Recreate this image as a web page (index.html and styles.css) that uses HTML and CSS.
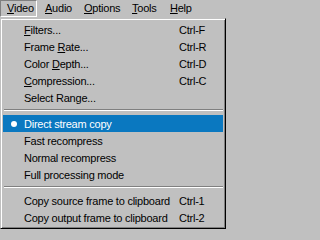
FILE: index.html
```html
<!DOCTYPE html>
<html>
<head>
<meta charset="utf-8">
<link rel="stylesheet" href="styles.css">
</head>
<body>
<div class="menubar">
  <div class="mitem active"><u>V</u>ideo</div>
  <div class="mitem"><u>A</u>udio</div>
  <div class="mitem"><u>O</u>ptions</div>
  <div class="mitem"><u>T</u>ools</div>
  <div class="mitem"><u>H</u>elp</div>
</div>
<div class="popup">
  <div class="row"><span class="check"></span><span class="label"><u>F</u>ilters...</span><span class="key">Ctrl-F</span></div>
  <div class="row"><span class="check"></span><span class="label">Frame <u>R</u>ate...</span><span class="key">Ctrl-R</span></div>
  <div class="row"><span class="check"></span><span class="label">Color <u>D</u>epth...</span><span class="key">Ctrl-D</span></div>
  <div class="row"><span class="check"></span><span class="label"><u>C</u>ompression...</span><span class="key">Ctrl-C</span></div>
  <div class="row"><span class="check"></span><span class="label">Select Range...</span><span class="key"></span></div>
  <div class="sep"></div>
  <div class="row selected"><span class="check"><span class="dot"></span></span><span class="label">Direct stream copy</span><span class="key"></span></div>
  <div class="row"><span class="check"></span><span class="label">Fast recompress</span><span class="key"></span></div>
  <div class="row"><span class="check"></span><span class="label">Normal recompress</span><span class="key"></span></div>
  <div class="row"><span class="check"></span><span class="label">Full processing mode</span><span class="key"></span></div>
  <div class="sep"></div>
  <div class="row"><span class="check"></span><span class="label">Copy source frame to clipboard</span><span class="key">Ctrl-1</span></div>
  <div class="row"><span class="check"></span><span class="label">Copy output frame to clipboard</span><span class="key">Ctrl-2</span></div>
</div>
</body>
</html>
```

FILE: styles.css
```css
html, body {
  margin: 0;
  padding: 0;
  background: #c0c0c0;
}
body {
  width: 226px;
  height: 229px;
  overflow: hidden;
  font-family: "Liberation Sans", Arial, sans-serif;
  font-size: 11px;
  letter-spacing: -0.23px;
  color: #000;
}
u {
  text-decoration-thickness: 1px;
  text-underline-offset: 1px;
}
.menubar {
  height: 18px;
  display: grid;
  grid-template-columns: 38px 39px 48px 38px 1fr;
  align-items: start;
}
.mitem {
  height: 17px;
  box-sizing: border-box;
  padding-left: 7px;
  line-height: 17px;
  white-space: nowrap;
}
.mitem.active {
  width: 37px;
  padding-left: 6px;
  line-height: 15px;
  border-top: 1px solid #808080;
  border-left: 1px solid #808080;
  border-right: 1px solid #fff;
  border-bottom: 1px solid #fff;
}
.popup {
  box-sizing: border-box;
  width: 226px;
  height: 211px;
  border-style: solid;
  border-width: 1px;
  border-color: #c0c0c0 #000 #000 #c0c0c0;
  box-shadow: inset 1px 1px 0 #fff, inset -1px -1px 0 #808080;
  padding: 2px;
}
.row {
  display: flex;
  align-items: center;
  height: 17px;
  white-space: nowrap;
}
.row.selected {
  background: #0a78c0;
  color: #fff;
}
.check {
  width: 21px;
  display: flex;
  justify-content: center;
  align-items: center;
}
.dot {
  width: 6px;
  height: 6px;
  border-radius: 50%;
  background: #fff;
}
.label {
  width: 155px;
}
.key {
  flex: 1;
}
.sep {
  height: 9px;
  display: flex;
  flex-direction: column;
  justify-content: center;
  padding-left: 1px;
}
.sep::before {
  content: "";
  display: block;
  height: 1px;
  background: #808080;
  margin-top: 3px;
}
.sep::after {
  content: "";
  display: block;
  height: 1px;
  background: #fff;
  margin-bottom: 4px;
}
```
